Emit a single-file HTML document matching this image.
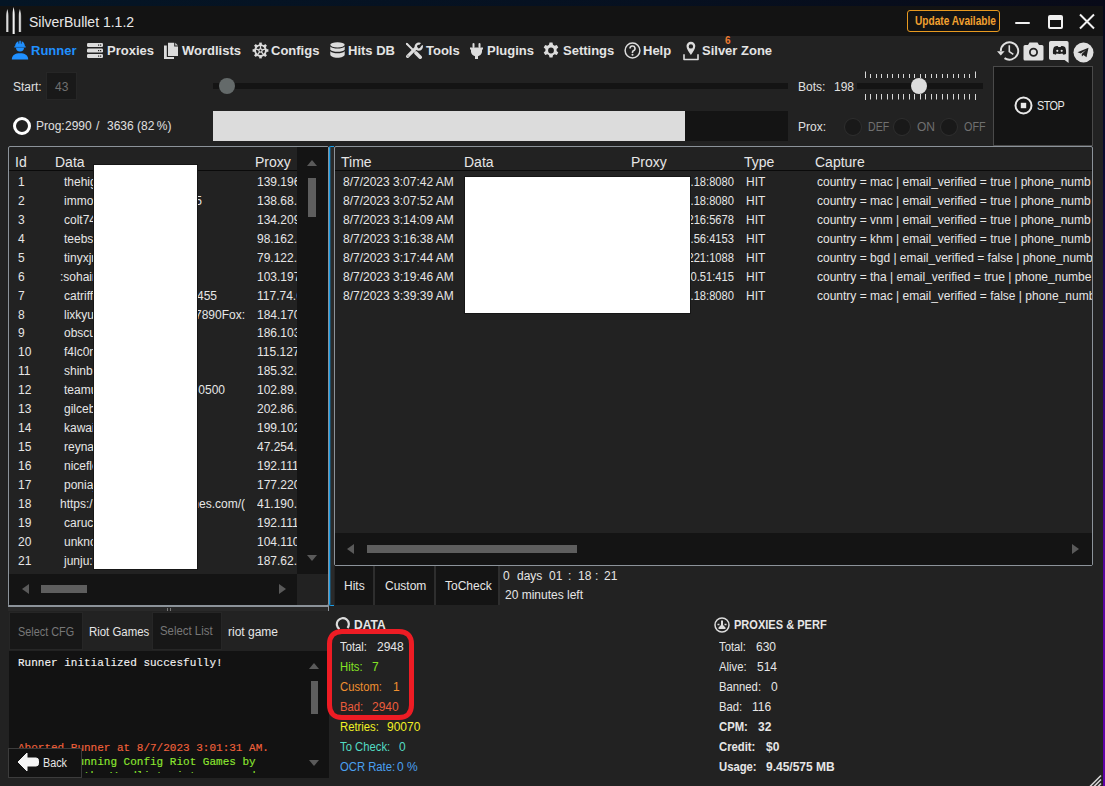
<!DOCTYPE html>
<html><head><meta charset="utf-8">
<style>
*{margin:0;padding:0;box-sizing:border-box}
html,body{width:1105px;height:786px;overflow:hidden;background:#222222}
body{position:relative;font-family:"Liberation Sans",sans-serif;color:#e6e6e6}
.a{position:absolute}
.t{position:absolute;white-space:nowrap;line-height:1}
.mono{font-family:"Liberation Mono",monospace}
</style></head><body>
<!-- desktop strips -->
<div class="a" style="left:0;top:0;width:1105px;height:6px;background:linear-gradient(90deg,#041525,#061020 60%,#080a18)"></div>
<div class="a" style="left:1103px;top:0;width:2px;height:786px;background:linear-gradient(180deg,#060818 0%,#0a0a30 20%,#2a0870 45%,#5a06a0 75%,#6000a8 100%)"></div>
<!-- title bar -->
<div class="a" style="left:0;top:6px;width:1103px;height:30px;background:#131313"></div>
<div class="t" style="left:29px;top:15px;font-size:14px;color:#e8e8e8">SilverBullet 1.1.2</div>
<!-- update -->
<div class="a" style="left:907px;top:10px;width:93px;height:22px;border:1px solid #e89a20;border-radius:3px"></div>
<div class="t" style="left:915px;top:15px;font-size:12px;font-weight:bold;color:#f0a030;transform:scaleX(0.845);transform-origin:0 0">Update Available</div>
<div class="a" style="left:1015px;top:21.5px;width:15px;height:2.5px;border-radius:1.2px;background:#f0f0f0"></div>
<div class="a" style="left:1048px;top:15px;width:15px;height:14px;border:2px solid #f0f0f0;border-top-width:5px;border-radius:2px"></div>
<svg class="a" style="left:1078px;top:13px" width="18" height="17" viewBox="0 0 18 17"><path d="M2 1.5L16 15.5M16 1.5L2 15.5" stroke="#f2f2f2" stroke-width="2"/></svg>

<!-- NAV -->
<svg class="a" style="left:8px;top:38px" width="24" height="24" viewBox="0 0 24 24"><g fill="#2090ff"><path d="M7 9.2C7 6 8.5 3.8 10.3 3.2L10.6 5.8 11.2 5.8 11.3 2.7H12.8L12.9 5.8 13.5 5.8 13.8 3.2C15.6 3.8 17 6 17 9.2z"/><rect x="6.3" y="8.3" width="11.4" height="1" /><path d="M8 9.6h8a4 3.9 0 0 1-8 0z"/><path d="M3.8 21.4C3.8 17.2 7.4 15.3 12 15.3S20.2 17.2 20.2 21.4z"/></g><rect x="6.3" y="8.9" width="11.4" height="0.7" fill="#1a60a8"/></svg>
<div class="t" style="left:31px;top:44px;font-size:13px;font-weight:bold;color:#2090ff">Runner</div>
<svg class="a" style="left:87px;top:43px" width="17" height="15" viewBox="0 0 17 15"><g fill="#dcdcdc"><rect x="0" y="0" width="16" height="4" rx="1.2"/><rect x="0" y="5.5" width="16" height="4" rx="1.2"/><rect x="0" y="11" width="16" height="4" rx="1.2"/></g><g fill="#222"><rect x="11" y="1.5" width="1.2" height="1.2"/><rect x="13" y="1.5" width="1.2" height="1.2"/><rect x="11" y="7" width="1.2" height="1.2"/><rect x="13" y="7" width="1.2" height="1.2"/><rect x="11" y="12.5" width="1.2" height="1.2"/><rect x="13" y="12.5" width="1.2" height="1.2"/></g></svg>
<div class="t" style="left:107px;top:44px;font-size:13px;font-weight:bold;color:#e4e4e4">Proxies</div>
<svg class="a" style="left:164px;top:42px" width="15" height="18" viewBox="0 0 15 18"><path d="M4 0.7h6.2v3.8h3.8V14H4z" fill="#dcdcdc"/><path d="M11.2 0.7l2.8 2.8h-2.8z" fill="#c8c8c8"/><path d="M0 3.5h2.8v11.5h7.2V17H0z" fill="#dcdcdc"/></svg>
<div class="t" style="left:182px;top:44px;font-size:13px;font-weight:bold;color:#e4e4e4">Wordlists</div>
<svg class="a" style="left:252px;top:42px" width="17" height="17" viewBox="0 0 17 17"><g fill="#dcdcdc"><rect x="7.2" y="0.6" width="2.6" height="3" transform="rotate(0 8.5 8.5)"/><rect x="7.2" y="0.6" width="2.6" height="3" transform="rotate(45 8.5 8.5)"/><rect x="7.2" y="0.6" width="2.6" height="3" transform="rotate(90 8.5 8.5)"/><rect x="7.2" y="0.6" width="2.6" height="3" transform="rotate(135 8.5 8.5)"/><rect x="7.2" y="0.6" width="2.6" height="3" transform="rotate(180 8.5 8.5)"/><rect x="7.2" y="0.6" width="2.6" height="3" transform="rotate(225 8.5 8.5)"/><rect x="7.2" y="0.6" width="2.6" height="3" transform="rotate(270 8.5 8.5)"/><rect x="7.2" y="0.6" width="2.6" height="3" transform="rotate(315 8.5 8.5)"/></g><circle cx="8.5" cy="8.5" r="5.4" fill="none" stroke="#dcdcdc" stroke-width="1.8"/><circle cx="8.5" cy="8.5" r="1.6" fill="none" stroke="#dcdcdc" stroke-width="1.2"/><g stroke="#dcdcdc" stroke-width="1.3"><line x1="8.50" y1="6.90" x2="8.50" y2="3.50"/><line x1="10.02" y1="8.01" x2="13.26" y2="6.95"/><line x1="9.44" y1="9.79" x2="11.44" y2="12.55"/><line x1="7.56" y1="9.79" x2="5.56" y2="12.55"/><line x1="6.98" y1="8.01" x2="3.74" y2="6.95"/></g></svg>
<div class="t" style="left:271px;top:44px;font-size:13px;font-weight:bold;color:#e4e4e4">Configs</div>
<svg class="a" style="left:330px;top:42px" width="15" height="17" viewBox="0 0 15 17"><g fill="#dcdcdc"><ellipse cx="7.5" cy="2.8" rx="7.2" ry="2.6"/><path d="M0.3 4.6c1.5 1.4 4 2 7.2 2s5.7-.6 7.2-2v3.2c-1.5 1.4-4 2-7.2 2s-5.7-.6-7.2-2z"/><path d="M0.3 9.2c1.5 1.4 4 2 7.2 2s5.7-.6 7.2-2v3.4c0 1.8-3.2 3.2-7.2 3.2S0.3 14.4 0.3 12.6z"/></g></svg>
<div class="t" style="left:348px;top:44px;font-size:13px;font-weight:bold;color:#e4e4e4">Hits DB</div>
<svg class="a" style="left:405px;top:42px" width="18" height="17" viewBox="0 0 18 17"><g stroke="#dcdcdc" stroke-linecap="round"><path d="M2 2L9 9" stroke-width="2"/><path d="M11 11L15.2 15.2" stroke-width="3.6"/><path d="M2.6 14.4L11 6" stroke-width="3.2"/></g><circle cx="13.8" cy="4.6" r="3" fill="none" stroke="#dcdcdc" stroke-width="2.4"/><path d="M13.6 3.6L17.5 -0.3 19 1.2 15 5.2z" fill="#222"/><path d="M0.8 1.5L1.6 0.8 3.5 2.3 2.3 3.5z" fill="#dcdcdc"/><circle cx="3" cy="14" r="0.7" fill="#777"/></svg>
<div class="t" style="left:426px;top:44px;font-size:13px;font-weight:bold;color:#e4e4e4">Tools</div>
<svg class="a" style="left:470px;top:43px" width="13" height="16" viewBox="0 0 13 16"><g fill="#dcdcdc"><rect x="2.5" y="0" width="2" height="5" rx="1"/><rect x="8.5" y="0" width="2" height="5" rx="1"/><path d="M0 4.5h13v2h-1v2.5a5.5 5.5 0 0 1-4 4.2V16H5v-2.8a5.5 5.5 0 0 1-4-4.2V6.5H0z"/></g></svg>
<div class="t" style="left:487px;top:44px;font-size:13px;font-weight:bold;color:#e4e4e4">Plugins</div>
<svg class="a" style="left:543px;top:42px" width="16" height="17" viewBox="0 0 16 17"><path fill="#dcdcdc" fill-rule="evenodd" d="M6.5 0.5h3l.5 2.3 1.6.9 2.2-.8 1.5 2.6-1.7 1.6v1.8l1.7 1.6-1.5 2.6-2.2-.8-1.6.9-.5 2.3h-3l-.5-2.3-1.6-.9-2.2.8L.7 10.5l1.7-1.6V7.1L.7 5.5l1.5-2.6 2.2.8 1.6-.9zM8 5.6a2.9 2.9 0 1 0 0 5.8 2.9 2.9 0 0 0 0-5.8z"/></svg>
<div class="t" style="left:563px;top:44px;font-size:13px;font-weight:bold;color:#e4e4e4">Settings</div>
<svg class="a" style="left:624px;top:42px" width="17" height="17" viewBox="0 0 17 17"><circle cx="8.5" cy="8.5" r="7.4" fill="none" stroke="#dcdcdc" stroke-width="1.5"/><path d="M6 6.5a2.5 2.5 0 1 1 3.5 2.3c-.7.3-1 .8-1 1.5v.7" fill="none" stroke="#dcdcdc" stroke-width="1.6"/><circle cx="8.5" cy="12.8" r="1" fill="#dcdcdc"/></svg>
<div class="t" style="left:643px;top:44px;font-size:13px;font-weight:bold;color:#e4e4e4">Help</div>
<svg class="a" style="left:683px;top:41px" width="17" height="20" viewBox="0 0 17 20"><path fill="#dcdcdc" fill-rule="evenodd" d="M7.9 0.7a4.4 4.4 0 0 1 4.4 4.4c0 2.8-2.4 6.2-4.4 8.8C5.9 11.3 3.5 7.9 3.5 5.1A4.4 4.4 0 0 1 7.9 0.7zm0 2.5a2.2 2.2 0 1 0 0 4.4 2.2 2.2 0 0 0 0-4.4z"/><path d="M1 13.3v5.2h14v-5.2" fill="none" stroke="#dcdcdc" stroke-width="1.6" stroke-linejoin="round"/></svg>
<div class="t" style="left:702px;top:44px;font-size:13px;font-weight:bold;color:#e4e4e4">Silver Zone</div>
<div class="t" style="left:725px;top:36px;font-size:10px;font-weight:bold;color:#ee7a30">6</div>

<!-- logo -->
<svg class="a" style="left:5px;top:7px" width="18" height="28" viewBox="0 0 18 28"><defs><linearGradient id="bg1" x1="0" x2="1"><stop offset="0" stop-color="#777"/><stop offset="0.45" stop-color="#f4f4f4"/><stop offset="1" stop-color="#888"/></linearGradient></defs><g fill="url(#bg1)"><path d="M1 25V9C1 6 2 3.5 2.3 2 2.6 3.5 3.6 6 3.6 9v16z"/><path d="M7.3 27V7.5C7.3 4.5 8.3 2 8.6 0 8.9 2 10 4.5 10 7.5V27z"/><path d="M13.6 25V9c0-3 1-5.5 1.3-7 .3 1.5 1.3 4 1.3 7v16z"/></g></svg>
<!-- controls row -->
<div class="t" style="left:13px;top:81px;font-size:12px;color:#e0e0e0">Start:</div>
<div class="a" style="left:46px;top:72px;width:31px;height:28px;background:#191919;border:1px solid #262626"></div>
<div class="t" style="left:55px;top:81px;font-size:12px;color:#707070">43</div>
<div class="a" style="left:213px;top:83px;width:575px;height:6px;background:#141414"></div>
<div class="a" style="left:219px;top:78px;width:16px;height:16px;border-radius:50%;background:#646a6a"></div>
<div class="a" style="left:13px;top:117px;width:18px;height:18px;border-radius:50%;border:3px solid #ffffff"></div>
<div class="t" style="left:36px;top:120px;font-size:12px;color:#e0e0e0">Prog:</div><div class="t" style="left:65px;top:120px;font-size:12px;color:#e0e0e0">2990</div><div class="t" style="left:96px;top:120px;font-size:12px;color:#e0e0e0">/</div><div class="t" style="left:107px;top:120px;font-size:12px;color:#e0e0e0">3636</div><div class="t" style="left:137px;top:120px;font-size:12px;color:#e0e0e0">(82&#8201;%)</div>
<div class="a" style="left:213px;top:111px;width:575px;height:30px;background:#141414"></div>
<div class="a" style="left:213px;top:111px;width:472px;height:30px;background:#dcdcdc"></div>
<div class="t" style="left:798px;top:81px;font-size:12px;color:#e0e0e0">Bots:</div>
<div class="t" style="left:834px;top:81px;font-size:12px;color:#e0e0e0">198</div>
<div class="a" style="left:857px;top:83px;width:126px;height:6px;background:#141414"></div>
<svg class="a" style="left:860px;top:70px" width="120" height="32" viewBox="0 0 120 32"><rect x="5" y="1.5" width="1" height="6.5" fill="#d8d8d8"/><rect x="5" y="24" width="1" height="6" fill="#d8d8d8"/><rect x="10" y="4" width="1" height="4" fill="#d8d8d8"/><rect x="10" y="24" width="1" height="5.5" fill="#d8d8d8"/><rect x="16" y="4" width="1" height="4" fill="#d8d8d8"/><rect x="16" y="24" width="1" height="5.5" fill="#d8d8d8"/><rect x="21" y="4" width="1" height="4" fill="#d8d8d8"/><rect x="21" y="24" width="1" height="5.5" fill="#d8d8d8"/><rect x="27" y="4" width="1" height="4" fill="#d8d8d8"/><rect x="27" y="24" width="1" height="5.5" fill="#d8d8d8"/><rect x="32" y="4" width="1" height="4" fill="#d8d8d8"/><rect x="32" y="24" width="1" height="5.5" fill="#d8d8d8"/><rect x="38" y="4" width="1" height="4" fill="#d8d8d8"/><rect x="38" y="24" width="1" height="5.5" fill="#d8d8d8"/><rect x="43" y="4" width="1" height="4" fill="#d8d8d8"/><rect x="43" y="24" width="1" height="5.5" fill="#d8d8d8"/><rect x="49" y="4" width="1" height="4" fill="#d8d8d8"/><rect x="49" y="24" width="1" height="5.5" fill="#d8d8d8"/><rect x="54" y="4" width="1" height="4" fill="#d8d8d8"/><rect x="54" y="24" width="1" height="5.5" fill="#d8d8d8"/><rect x="60" y="4" width="1" height="4" fill="#d8d8d8"/><rect x="60" y="24" width="1" height="5.5" fill="#d8d8d8"/><rect x="65" y="4" width="1" height="4" fill="#d8d8d8"/><rect x="65" y="24" width="1" height="5.5" fill="#d8d8d8"/><rect x="71" y="4" width="1" height="4" fill="#d8d8d8"/><rect x="71" y="24" width="1" height="5.5" fill="#d8d8d8"/><rect x="76" y="4" width="1" height="4" fill="#d8d8d8"/><rect x="76" y="24" width="1" height="5.5" fill="#d8d8d8"/><rect x="82" y="4" width="1" height="4" fill="#d8d8d8"/><rect x="82" y="24" width="1" height="5.5" fill="#d8d8d8"/><rect x="87" y="4" width="1" height="4" fill="#d8d8d8"/><rect x="87" y="24" width="1" height="5.5" fill="#d8d8d8"/><rect x="93" y="4" width="1" height="4" fill="#d8d8d8"/><rect x="93" y="24" width="1" height="5.5" fill="#d8d8d8"/><rect x="98" y="4" width="1" height="4" fill="#d8d8d8"/><rect x="98" y="24" width="1" height="5.5" fill="#d8d8d8"/><rect x="104" y="4" width="1" height="4" fill="#d8d8d8"/><rect x="104" y="24" width="1" height="5.5" fill="#d8d8d8"/><rect x="109" y="4" width="1" height="4" fill="#d8d8d8"/><rect x="109" y="24" width="1" height="5.5" fill="#d8d8d8"/><rect x="115" y="1.5" width="1" height="6.5" fill="#d8d8d8"/><rect x="115" y="24" width="1" height="6" fill="#d8d8d8"/></svg>
<div class="a" style="left:911px;top:78px;width:16px;height:16px;border-radius:50%;background:#dcdcdc"></div>
<div class="t" style="left:798px;top:121px;font-size:12px;color:#e0e0e0">Prox:</div>
<div class="a" style="left:844px;top:118px;width:18px;height:18px;border-radius:50%;background:#191919;border:1px solid #2e2e2e"></div>
<div class="t" style="left:868px;top:121px;font-size:12px;color:#707070;transform:scaleX(0.88);transform-origin:0 0">DEF</div>
<div class="a" style="left:893px;top:118px;width:18px;height:18px;border-radius:50%;background:#191919;border:1px solid #2e2e2e"></div>
<div class="t" style="left:917px;top:121px;font-size:12px;color:#707070">ON</div>
<div class="a" style="left:940px;top:118px;width:18px;height:18px;border-radius:50%;background:#191919;border:1px solid #2e2e2e"></div>
<div class="t" style="left:964px;top:121px;font-size:12px;color:#707070;transform:scaleX(0.9);transform-origin:0 0">OFF</div>
<!-- STOP -->
<div class="a" style="left:993px;top:66px;width:100px;height:80px;background:#141414;border:1px solid #4a4a4a"></div>
<svg class="a" style="left:1014px;top:96px" width="19" height="19" viewBox="0 0 19 19"><circle cx="9.5" cy="9.5" r="8" fill="none" stroke="#e8e8e8" stroke-width="2"/><rect x="6.8" y="6.8" width="5.4" height="5.4" fill="#e8e8e8"/></svg>
<div class="t" style="left:1037px;top:100px;font-size:12px;color:#e8e8e8;letter-spacing:-0.6px;transform:scaleX(0.9);transform-origin:0 0">STOP</div>
<!-- top-right icons -->
<svg class="a" style="left:996px;top:40px" width="24" height="22" viewBox="0 0 24 22"><path d="M4.8 11A8.7 8.7 0 1 1 8.5 18.1" fill="none" stroke="#e0e0e0" stroke-width="1.9"/><path d="M1 11.3h7.6l-3.8 4.3z" fill="#e0e0e0"/><path d="M13.3 5.3v6.3l4 2.8" fill="none" stroke="#e0e0e0" stroke-width="1.6"/></svg>
<svg class="a" style="left:1023px;top:42px" width="21" height="19" viewBox="0 0 21 19"><path fill="#e0e0e0" d="M6.5 0.5h8l1.5 2.5h3a1.5 1.5 0 0 1 1.5 1.5v12.5a1.5 1.5 0 0 1-1.5 1.5H2a1.5 1.5 0 0 1-1.5-1.5V4.5A1.5 1.5 0 0 1 2 3h3z"/><circle cx="10.5" cy="10.2" r="3.6" fill="none" stroke="#222" stroke-width="1.8"/></svg>
<svg class="a" style="left:1049px;top:41px" width="21" height="22" viewBox="0 0 21 22"><path fill="#e0e0e0" d="M1.8 0h16a1.8 1.8 0 0 1 1.8 1.8V22l-4-3H1.8A1.8 1.8 0 0 1 0 17.2V1.8A1.8 1.8 0 0 1 1.8 0z"/><path fill="#1e1e1e" d="M5 6C6.5 5 8 5 9 5.2L9.3 6H11.7L12 5.2C13 5 14.5 5 16 6C17 8 17.3 10.5 17 12.8C16 13.5 15 13.7 14.2 13.7L13.4 12.6C11.5 13 9.5 13 7.6 12.6L6.8 13.7C6 13.7 5 13.5 4 12.8C3.7 10.5 4 8 5 6z"/><circle cx="8.3" cy="9.8" r="1.1" fill="#e0e0e0"/><circle cx="12.7" cy="9.8" r="1.1" fill="#e0e0e0"/></svg>
<svg class="a" style="left:1073px;top:42px" width="21" height="21" viewBox="0 0 21 21"><circle cx="10.5" cy="10.5" r="10" fill="#e0e0e0"/><path d="M4.5 10.2l11-4.5-2 9.5-3-2.2-1.6 1.6-.2-2.5 4.3-4-5.3 3.3z" fill="#222"/></svg>

<!-- LEFT GRID -->
<div class="a" style="left:8px;top:146px;width:321px;height:460px;border:1px solid #8c939a;border-radius:2px;background:#222"></div>
<div class="a" style="left:9px;top:170px;width:288px;height:1px;background:#0a0a0a"></div>
<div class="a" style="left:297px;top:147px;width:31px;height:427px;background:#141414"></div>
<div class="a" style="left:9px;top:574px;width:288px;height:31px;background:#141414"></div>
<div class="t" style="left:15px;top:155px;font-size:14px;color:#e6e6e6">Id</div>
<div class="t" style="left:55px;top:155px;font-size:14px;color:#e6e6e6">Data</div>
<div class="t" style="left:255px;top:155px;font-size:14px;color:#e6e6e6">Proxy</div>
<svg class="a" style="left:306px;top:159px" width="12" height="8" viewBox="0 0 12 8"><path d="M1 7h10L6 1z" fill="#5a5a5a"/></svg>
<div class="a" style="left:308px;top:178px;width:8px;height:39px;background:#5e5e5e"></div>
<svg class="a" style="left:306px;top:554px" width="12" height="8" viewBox="0 0 12 8"><path d="M1 1h10L6 7z" fill="#5a5a5a"/></svg>
<svg class="a" style="left:21px;top:583px" width="9" height="12" viewBox="0 0 9 12"><path d="M8 1v10L1 6z" fill="#5a5a5a"/></svg>
<div class="a" style="left:41px;top:585px;width:46px;height:8px;background:#5e5e5e"></div>
<svg class="a" style="left:278px;top:583px" width="9" height="12" viewBox="0 0 9 12"><path d="M1 1v10L8 6z" fill="#5a5a5a"/></svg>
<div class="a" style="left:9px;top:171px;width:288px;height:403px;overflow:hidden">
<div class="t" style="left:9px;top:5.00px;font-size:12px;color:#e6e6e6">1</div><div class="t" style="left:55px;top:5.00px;font-size:12px;color:#e6e6e6">thehigh</div><div class="a" style="left:248px;top:2.00px;width:40px;height:18px;overflow:hidden"><div class="t" style="left:0px;top:3px;font-size:12px;color:#e6e6e6">139.196</div></div><div class="t" style="left:9px;top:23.93px;font-size:12px;color:#e6e6e6">2</div><div class="t" style="left:55px;top:23.93px;font-size:12px;color:#e6e6e6">immor</div><div class="a" style="left:188px;top:20.93px;width:5px;height:18px;overflow:hidden"><div class="t" style="right:0;top:3px;font-size:12px;color:#e6e6e6">5</div></div><div class="a" style="left:248px;top:20.93px;width:40px;height:18px;overflow:hidden"><div class="t" style="left:0px;top:3px;font-size:12px;color:#e6e6e6">138.68.1</div></div><div class="t" style="left:9px;top:42.86px;font-size:12px;color:#e6e6e6">3</div><div class="t" style="left:55px;top:42.86px;font-size:12px;color:#e6e6e6">colt745</div><div class="a" style="left:248px;top:39.86px;width:40px;height:18px;overflow:hidden"><div class="t" style="left:0px;top:3px;font-size:12px;color:#e6e6e6">134.209</div></div><div class="t" style="left:9px;top:61.79px;font-size:12px;color:#e6e6e6">4</div><div class="t" style="left:55px;top:61.79px;font-size:12px;color:#e6e6e6">teebs2</div><div class="a" style="left:248px;top:58.79px;width:40px;height:18px;overflow:hidden"><div class="t" style="left:0px;top:3px;font-size:12px;color:#e6e6e6">98.162.2</div></div><div class="t" style="left:9px;top:80.72px;font-size:12px;color:#e6e6e6">5</div><div class="t" style="left:55px;top:80.72px;font-size:12px;color:#e6e6e6">tinyxjr</div><div class="a" style="left:248px;top:77.72px;width:40px;height:18px;overflow:hidden"><div class="t" style="left:0px;top:3px;font-size:12px;color:#e6e6e6">79.122.2</div></div><div class="t" style="left:9px;top:99.65px;font-size:12px;color:#e6e6e6">6</div><div class="t" style="left:51px;top:99.65px;font-size:12px;color:#e6e6e6">:sohain</div><div class="a" style="left:248px;top:96.65px;width:40px;height:18px;overflow:hidden"><div class="t" style="left:0px;top:3px;font-size:12px;color:#e6e6e6">103.197</div></div><div class="t" style="left:9px;top:118.58px;font-size:12px;color:#e6e6e6">7</div><div class="t" style="left:55px;top:118.58px;font-size:12px;color:#e6e6e6">catriff</div><div class="a" style="left:188px;top:115.58px;width:20px;height:18px;overflow:hidden"><div class="t" style="right:0;top:3px;font-size:12px;color:#e6e6e6">455</div></div><div class="a" style="left:248px;top:115.58px;width:40px;height:18px;overflow:hidden"><div class="t" style="left:0px;top:3px;font-size:12px;color:#e6e6e6">117.74.6</div></div><div class="t" style="left:9px;top:137.51px;font-size:12px;color:#e6e6e6">8</div><div class="t" style="left:55px;top:137.51px;font-size:12px;color:#e6e6e6">lixkyu</div><div class="a" style="left:188px;top:134.51px;width:48px;height:18px;overflow:hidden"><div class="t" style="right:0;top:3px;font-size:12px;color:#e6e6e6">67890Fox:</div></div><div class="a" style="left:248px;top:134.51px;width:40px;height:18px;overflow:hidden"><div class="t" style="left:0px;top:3px;font-size:12px;color:#e6e6e6">184.170</div></div><div class="t" style="left:9px;top:156.44px;font-size:12px;color:#e6e6e6">9</div><div class="t" style="left:55px;top:156.44px;font-size:12px;color:#e6e6e6">obscur</div><div class="a" style="left:248px;top:153.44px;width:40px;height:18px;overflow:hidden"><div class="t" style="left:0px;top:3px;font-size:12px;color:#e6e6e6">186.103</div></div><div class="t" style="left:9px;top:175.37px;font-size:12px;color:#e6e6e6">10</div><div class="t" style="left:55px;top:175.37px;font-size:12px;color:#e6e6e6">f4lc0n</div><div class="a" style="left:248px;top:172.37px;width:40px;height:18px;overflow:hidden"><div class="t" style="left:0px;top:3px;font-size:12px;color:#e6e6e6">115.127</div></div><div class="t" style="left:9px;top:194.30px;font-size:12px;color:#e6e6e6">11</div><div class="t" style="left:55px;top:194.30px;font-size:12px;color:#e6e6e6">shinba</div><div class="a" style="left:248px;top:191.30px;width:40px;height:18px;overflow:hidden"><div class="t" style="left:0px;top:3px;font-size:12px;color:#e6e6e6">185.32.4</div></div><div class="t" style="left:9px;top:213.23px;font-size:12px;color:#e6e6e6">12</div><div class="t" style="left:55px;top:213.23px;font-size:12px;color:#e6e6e6">teamup</div><div class="a" style="left:188px;top:210.23px;width:28px;height:18px;overflow:hidden"><div class="t" style="right:0;top:3px;font-size:12px;color:#e6e6e6">0500</div></div><div class="a" style="left:248px;top:210.23px;width:40px;height:18px;overflow:hidden"><div class="t" style="left:0px;top:3px;font-size:12px;color:#e6e6e6">102.89.1</div></div><div class="t" style="left:9px;top:232.16px;font-size:12px;color:#e6e6e6">13</div><div class="t" style="left:55px;top:232.16px;font-size:12px;color:#e6e6e6">gilceb</div><div class="a" style="left:248px;top:229.16px;width:40px;height:18px;overflow:hidden"><div class="t" style="left:0px;top:3px;font-size:12px;color:#e6e6e6">202.86.1</div></div><div class="t" style="left:9px;top:251.09px;font-size:12px;color:#e6e6e6">14</div><div class="t" style="left:55px;top:251.09px;font-size:12px;color:#e6e6e6">kawaii</div><div class="a" style="left:248px;top:248.09px;width:40px;height:18px;overflow:hidden"><div class="t" style="left:0px;top:3px;font-size:12px;color:#e6e6e6">199.102</div></div><div class="t" style="left:9px;top:270.02px;font-size:12px;color:#e6e6e6">15</div><div class="t" style="left:55px;top:270.02px;font-size:12px;color:#e6e6e6">reyna8</div><div class="a" style="left:248px;top:267.02px;width:40px;height:18px;overflow:hidden"><div class="t" style="left:0px;top:3px;font-size:12px;color:#e6e6e6">47.254.4</div></div><div class="t" style="left:9px;top:288.95px;font-size:12px;color:#e6e6e6">16</div><div class="t" style="left:55px;top:288.95px;font-size:12px;color:#e6e6e6">niceflo</div><div class="a" style="left:248px;top:285.95px;width:40px;height:18px;overflow:hidden"><div class="t" style="left:0px;top:3px;font-size:12px;color:#e6e6e6">192.111</div></div><div class="t" style="left:9px;top:307.88px;font-size:12px;color:#e6e6e6">17</div><div class="t" style="left:55px;top:307.88px;font-size:12px;color:#e6e6e6">poniaj</div><div class="a" style="left:248px;top:304.88px;width:40px;height:18px;overflow:hidden"><div class="t" style="left:0px;top:3px;font-size:12px;color:#e6e6e6">177.220</div></div><div class="t" style="left:9px;top:326.81px;font-size:12px;color:#e6e6e6">18</div><div class="t" style="left:51px;top:326.81px;font-size:12px;color:#e6e6e6">https:/</div><div class="a" style="left:188px;top:323.81px;width:48px;height:18px;overflow:hidden"><div class="t" style="right:0;top:3px;font-size:12px;color:#e6e6e6">nes.com/(</div></div><div class="a" style="left:248px;top:323.81px;width:40px;height:18px;overflow:hidden"><div class="t" style="left:0px;top:3px;font-size:12px;color:#e6e6e6">41.190.1</div></div><div class="t" style="left:9px;top:345.74px;font-size:12px;color:#e6e6e6">19</div><div class="t" style="left:55px;top:345.74px;font-size:12px;color:#e6e6e6">caruch</div><div class="a" style="left:248px;top:342.74px;width:40px;height:18px;overflow:hidden"><div class="t" style="left:0px;top:3px;font-size:12px;color:#e6e6e6">192.111</div></div><div class="t" style="left:9px;top:364.67px;font-size:12px;color:#e6e6e6">20</div><div class="t" style="left:55px;top:364.67px;font-size:12px;color:#e6e6e6">unknow</div><div class="a" style="left:248px;top:361.67px;width:40px;height:18px;overflow:hidden"><div class="t" style="left:0px;top:3px;font-size:12px;color:#e6e6e6">104.110</div></div><div class="t" style="left:9px;top:383.60px;font-size:12px;color:#e6e6e6">21</div><div class="t" style="left:55px;top:383.60px;font-size:12px;color:#e6e6e6">junju:0</div><div class="a" style="left:248px;top:380.60px;width:40px;height:18px;overflow:hidden"><div class="t" style="left:0px;top:3px;font-size:12px;color:#e6e6e6">187.62.8</div></div></div>
<div class="a" style="left:94px;top:165px;width:103px;height:404px;background:#fff;box-shadow:0 0 0 1px #161616"></div>

<div class="a" style="left:329px;top:146px;width:5px;height:460px;border:1px solid #1a9ee8;border-right:none;border-radius:2px 0 0 2px"></div><div class="a" style="left:330px;top:148px;width:1px;height:456px;background:rgba(26,158,232,0.35)"></div>
<div class="a" style="left:8px;top:607px;width:321px;height:4px;background:#292929"></div><div class="a" style="left:8px;top:605px;width:321px;height:2px;background:#8c939a"></div><div class="a" style="left:328px;top:605px;width:1px;height:6px;background:#8c939a"></div><div class="a" style="left:331px;top:147px;width:3px;height:458px;background:#2a2a2a"></div><div class="a" style="left:167px;top:608px;width:1px;height:3px;background:#777"></div><div class="a" style="left:170px;top:608px;width:1px;height:3px;background:#777"></div>

<!-- RIGHT GRID -->
<div class="a" style="left:334px;top:146px;width:759px;height:420px;border:1px solid #8c939a;border-radius:2px;background:#222"></div>
<div class="a" style="left:335px;top:170px;width:757px;height:1px;background:#0a0a0a"></div>
<div class="a" style="left:335px;top:533px;width:757px;height:32px;background:#141414"></div>
<div class="t" style="left:341px;top:155px;font-size:14px;color:#e6e6e6">Time</div>
<div class="t" style="left:464px;top:155px;font-size:14px;color:#e6e6e6">Data</div>
<div class="t" style="left:631px;top:155px;font-size:14px;color:#e6e6e6">Proxy</div>
<div class="t" style="left:744px;top:155px;font-size:14px;color:#e6e6e6">Type</div>
<div class="t" style="left:815px;top:155px;font-size:14px;color:#e6e6e6">Capture</div>
<svg class="a" style="left:346px;top:543px" width="9" height="12" viewBox="0 0 9 12"><path d="M8 1v10L1 6z" fill="#5a5a5a"/></svg>
<div class="a" style="left:367px;top:545px;width:210px;height:8px;background:#5e5e5e"></div>
<svg class="a" style="left:1071px;top:543px" width="9" height="12" viewBox="0 0 9 12"><path d="M1 1v10L8 6z" fill="#5a5a5a"/></svg>
<div class="a" style="left:335px;top:171px;width:757px;height:362px;overflow:hidden">
<div class="t" style="left:8px;top:5px;font-size:12px;color:#e6e6e6">8/7/2023 3:07:42 AM</div><div class="t" style="left:347px;top:5px;width:52px;font-size:12px;color:#e6e6e6;text-align:right;transform:scaleX(0.93);transform-origin:100% 0">.18:8080</div><div class="t" style="left:411px;top:5px;font-size:12px;color:#e6e6e6">HIT</div><div class="t" style="left:482px;top:5px;font-size:12px;color:#e6e6e6">country = mac | email_verified = true | phone_numb</div><div class="t" style="left:8px;top:24px;font-size:12px;color:#e6e6e6">8/7/2023 3:07:52 AM</div><div class="t" style="left:347px;top:24px;width:52px;font-size:12px;color:#e6e6e6;text-align:right;transform:scaleX(0.93);transform-origin:100% 0">.18:8080</div><div class="t" style="left:411px;top:24px;font-size:12px;color:#e6e6e6">HIT</div><div class="t" style="left:482px;top:24px;font-size:12px;color:#e6e6e6">country = mac | email_verified = true | phone_numb</div><div class="t" style="left:8px;top:43px;font-size:12px;color:#e6e6e6">8/7/2023 3:14:09 AM</div><div class="t" style="left:347px;top:43px;width:52px;font-size:12px;color:#e6e6e6;text-align:right;transform:scaleX(0.93);transform-origin:100% 0">216:5678</div><div class="t" style="left:411px;top:43px;font-size:12px;color:#e6e6e6">HIT</div><div class="t" style="left:482px;top:43px;font-size:12px;color:#e6e6e6">country = vnm | email_verified = true | phone_numb</div><div class="t" style="left:8px;top:62px;font-size:12px;color:#e6e6e6">8/7/2023 3:16:38 AM</div><div class="t" style="left:347px;top:62px;width:52px;font-size:12px;color:#e6e6e6;text-align:right;transform:scaleX(0.93);transform-origin:100% 0">.56:4153</div><div class="t" style="left:411px;top:62px;font-size:12px;color:#e6e6e6">HIT</div><div class="t" style="left:482px;top:62px;font-size:12px;color:#e6e6e6">country = khm | email_verified = true | phone_numb</div><div class="t" style="left:8px;top:81px;font-size:12px;color:#e6e6e6">8/7/2023 3:17:44 AM</div><div class="t" style="left:347px;top:81px;width:52px;font-size:12px;color:#e6e6e6;text-align:right;transform:scaleX(0.93);transform-origin:100% 0">221:1088</div><div class="t" style="left:411px;top:81px;font-size:12px;color:#e6e6e6">HIT</div><div class="t" style="left:482px;top:81px;font-size:12px;color:#e6e6e6">country = bgd | email_verified = false | phone_numb</div><div class="t" style="left:8px;top:100px;font-size:12px;color:#e6e6e6">8/7/2023 3:19:46 AM</div><div class="t" style="left:347px;top:100px;width:52px;font-size:12px;color:#e6e6e6;text-align:right;transform:scaleX(0.93);transform-origin:100% 0">0.51:415</div><div class="t" style="left:411px;top:100px;font-size:12px;color:#e6e6e6">HIT</div><div class="t" style="left:482px;top:100px;font-size:12px;color:#e6e6e6">country = tha | email_verified = true | phone_numbe</div><div class="t" style="left:8px;top:119px;font-size:12px;color:#e6e6e6">8/7/2023 3:39:39 AM</div><div class="t" style="left:347px;top:119px;width:52px;font-size:12px;color:#e6e6e6;text-align:right;transform:scaleX(0.93);transform-origin:100% 0">.18:8080</div><div class="t" style="left:411px;top:119px;font-size:12px;color:#e6e6e6">HIT</div><div class="t" style="left:482px;top:119px;font-size:12px;color:#e6e6e6">country = mac | email_verified = false | phone_numb</div></div>
<div class="a" style="left:465px;top:177px;width:225px;height:136px;background:#fff;box-shadow:0 0 0 1px #161616"></div>

<!-- BOTTOM LEFT -->
<div class="a" style="left:9px;top:612px;width:74px;height:38px;background:#171717;border:1px solid #262626"></div>
<div class="t" style="left:18px;top:626px;font-size:12px;color:#777;transform:scaleX(0.905);transform-origin:0 0">Select CFG</div>
<div class="t" style="left:89px;top:626px;font-size:12px;color:#e6e6e6;transform:scaleX(0.95);transform-origin:0 0">Riot Games</div>
<div class="a" style="left:152px;top:612px;width:70px;height:38px;background:#171717;border:1px solid #262626"></div>
<div class="t" style="left:160px;top:625px;font-size:12px;color:#777;transform:scaleX(0.95);transform-origin:0 0">Select List</div>
<div class="t" style="left:228px;top:626px;font-size:12px;color:#e6e6e6">riot game</div>
<div class="a" style="left:9px;top:651px;width:320px;height:127px;background:#121212"></div>
<div class="a" style="left:9px;top:651px;width:295px;height:122px;overflow:hidden">
 <div class="t mono" style="left:9px;top:7px;font-size:11px;color:#f4f4f4;-webkit-text-stroke:0.12px #f4f4f4">Runner initialized succesfully!</div>
 <div class="t mono" style="left:9px;top:92px;font-size:11px;color:#f2623c;-webkit-text-stroke:0.12px #f2623c">Aborted Runner at 8/7/2023 3:01:31 AM.</div>
 <div class="t mono" style="left:9px;top:106px;font-size:11px;color:#8ee830;-webkit-text-stroke:0.12px #8ee830">Started Running Config Riot Games by</div>
 <div class="t mono" style="left:9px;top:120px;font-size:11px;color:#8ee830;-webkit-text-stroke:0.12px #8ee830">Ruri with the Wordlist riot game and</div>
</div>
<svg class="a" style="left:308px;top:662px" width="12" height="8" viewBox="0 0 12 8"><path d="M1 7h10L6 1z" fill="#5a5a5a"/></svg>
<div class="a" style="left:311px;top:681px;width:7px;height:33px;background:#5e5e5e"></div>
<svg class="a" style="left:308px;top:759px" width="12" height="8" viewBox="0 0 12 8"><path d="M1 1h10L6 7z" fill="#5a5a5a"/></svg>
<div class="a" style="left:8px;top:748px;width:74px;height:30px;background:#121212;border:1px solid #3c3c3c"></div>
<svg class="a" style="left:17px;top:752px" width="22" height="20" viewBox="0 0 22 20"><path d="M1 10L10 1v5h9a2.5 2.5 0 0 1 2.5 2.5v3A2.5 2.5 0 0 1 19 14h-9v5z" fill="#f4f4f4" stroke="#f4f4f4" stroke-width="1" stroke-linejoin="round"/></svg>
<div class="t" style="left:43px;top:757px;font-size:12px;color:#e6e6e6;transform:scaleX(0.9);transform-origin:0 0">Back</div>
<!-- tabs -->
<div class="a" style="left:335px;top:566px;width:164px;height:39px;background:#141414"></div>
<div class="a" style="left:373px;top:566px;width:2px;height:39px;background:#2e2e2e"></div>
<div class="a" style="left:434px;top:566px;width:2px;height:39px;background:#2e2e2e"></div>
<div class="a" style="left:498px;top:566px;width:2px;height:39px;background:#2e2e2e"></div>
<div class="t" style="left:344px;top:580px;font-size:12px;color:#e6e6e6">Hits</div>
<div class="t" style="left:385px;top:580px;font-size:12px;color:#e6e6e6">Custom</div>
<div class="t" style="left:445px;top:580px;font-size:12px;color:#e6e6e6">ToCheck</div>
<div class="t" style="left:503px;top:570px;font-size:12px;color:#e6e6e6">0</div><div class="t" style="left:517px;top:570px;font-size:12px;color:#e6e6e6">days</div><div class="t" style="left:549px;top:570px;font-size:12px;color:#e6e6e6">01</div><div class="t" style="left:568px;top:570px;font-size:12px;color:#e6e6e6">:</div><div class="t" style="left:578px;top:570px;font-size:12px;color:#e6e6e6">18</div><div class="t" style="left:595px;top:570px;font-size:12px;color:#e6e6e6">:</div><div class="t" style="left:604px;top:570px;font-size:12px;color:#e6e6e6">21</div>
<div class="t" style="left:505px;top:589px;font-size:12px;color:#e6e6e6">20 minutes left</div>
<!-- DATA -->
<svg class="a" style="left:335px;top:617px" width="16" height="13" viewBox="0 0 16 13"><path d="M4.5 12.2A6 6 0 1 1 12.5 11" fill="none" stroke="#dcdcdc" stroke-width="2.2"/></svg>
<div class="t" style="left:354px;top:619px;font-size:12px;font-weight:bold;color:#e6e6e6">DATA</div>
<svg class="a" style="left:327px;top:629px" width="87" height="91" viewBox="0 0 87 91"><path d="M15.0 2.5H72.0C80.125 2.5 84.5 6.875 84.5 15.0V76.0C84.5 84.125 80.125 88.5 72.0 88.5H15.0C6.875 88.5 2.5 84.125 2.5 76.0V15.0C2.5 6.875 6.875 2.5 15.0 2.5Z" fill="none" stroke="#ee1c24" stroke-width="5"/></svg>
<div class="t" style="left:340px;top:641px;font-size:12px;color:#e6e6e6;transform:scaleX(0.94);transform-origin:0 0">Total:</div><div class="t" style="left:377px;top:641px;font-size:12px;color:#e6e6e6">2948</div>
<div class="t" style="left:340px;top:661px;font-size:12px;color:#84e424;transform:scaleX(0.94);transform-origin:0 0">Hits:</div><div class="t" style="left:372px;top:661px;font-size:12px;color:#84e424">7</div>
<div class="t" style="left:340px;top:681px;font-size:12px;color:#f09030;transform:scaleX(0.94);transform-origin:0 0">Custom:</div><div class="t" style="left:393px;top:681px;font-size:12px;color:#f09030">1</div>
<div class="t" style="left:340px;top:701px;font-size:12px;color:#ec5c3c;transform:scaleX(0.94);transform-origin:0 0">Bad:</div><div class="t" style="left:372px;top:701px;font-size:12px;color:#ec5c3c">2940</div>
<div class="t" style="left:340px;top:721px;font-size:12px;color:#f0f024;transform:scaleX(0.94);transform-origin:0 0">Retries:</div><div class="t" style="left:387px;top:721px;font-size:12px;color:#f0f024">90070</div>
<div class="t" style="left:340px;top:741px;font-size:12px;color:#52dcc4;transform:scaleX(0.94);transform-origin:0 0">To Check:</div><div class="t" style="left:399px;top:741px;font-size:12px;color:#52dcc4">0</div>
<div class="t" style="left:340px;top:761px;font-size:12px;color:#4aa0f0;transform:scaleX(0.94);transform-origin:0 0">OCR Rate:</div><div class="t" style="left:397px;top:761px;font-size:12px;color:#4aa0f0">0 %</div>
<!-- PROXIES & PERF -->
<svg class="a" style="left:714px;top:617px" width="16" height="16" viewBox="0 0 16 16"><circle cx="8" cy="8" r="7" fill="none" stroke="#dcdcdc" stroke-width="1.5"/><path d="M7 3.5h2v4.5l2.5 2.5v1.5h-7v-1.5L7 8z" fill="#dcdcdc"/><path d="M3.5 7.5h2M10.5 7.5h2" stroke="#dcdcdc" stroke-width="1.4"/></svg>
<div class="t" style="left:734px;top:619px;font-size:12px;font-weight:bold;color:#e6e6e6;transform:scaleX(0.92);transform-origin:0 0">PROXIES &amp; PERF</div>
<div class="t" style="left:719px;top:641px;font-size:12px;color:#e6e6e6;transform:scaleX(0.94);transform-origin:0 0">Total:</div><div class="t" style="left:756px;top:641px;font-size:12px;color:#e6e6e6">630</div>
<div class="t" style="left:719px;top:661px;font-size:12px;color:#e6e6e6;transform:scaleX(0.94);transform-origin:0 0">Alive:</div><div class="t" style="left:757px;top:661px;font-size:12px;color:#e6e6e6">514</div>
<div class="t" style="left:719px;top:681px;font-size:12px;color:#e6e6e6;transform:scaleX(0.94);transform-origin:0 0">Banned:</div><div class="t" style="left:771px;top:681px;font-size:12px;color:#e6e6e6">0</div>
<div class="t" style="left:719px;top:701px;font-size:12px;color:#e6e6e6;transform:scaleX(0.94);transform-origin:0 0">Bad:</div><div class="t" style="left:752px;top:701px;font-size:12px;color:#e6e6e6">116</div>
<div class="t" style="left:719px;top:721px;font-size:12px;font-weight:bold;color:#e6e6e6;transform:scaleX(0.94);transform-origin:0 0">CPM:</div><div class="t" style="left:758px;top:721px;font-size:12px;font-weight:bold;color:#e6e6e6">32</div>
<div class="t" style="left:719px;top:741px;font-size:12px;font-weight:bold;color:#e6e6e6;transform:scaleX(0.94);transform-origin:0 0">Credit:</div><div class="t" style="left:766px;top:741px;font-size:12px;font-weight:bold;color:#e6e6e6">$0</div>
<div class="t" style="left:719px;top:761px;font-size:12px;font-weight:bold;color:#e6e6e6;transform:scaleX(0.94);transform-origin:0 0">Usage:</div><div class="t" style="left:766px;top:761px;font-size:12px;font-weight:bold;color:#e6e6e6">9.45/575 MB</div>
<svg class="a" style="left:1088px;top:773px" width="15" height="13" viewBox="0 0 15 13"><path d="M2 13.5L13 2.5M6 13.5L13 6.5M10 13.5L13 10.5" stroke="#d4d4d4" stroke-width="1.6"/></svg>
</body></html>
